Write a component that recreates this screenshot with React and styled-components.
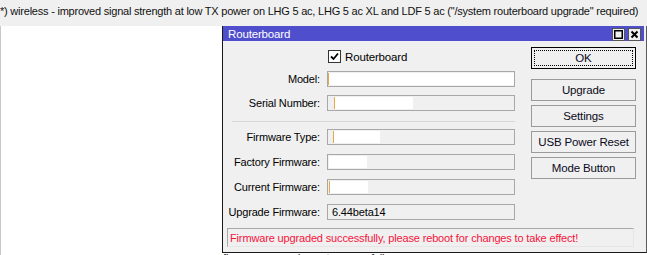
import styled, { createGlobalStyle } from "styled-components";

const GlobalStyle = createGlobalStyle`
  html, body {
    margin: 0;
    padding: 0;
    background: #ffffff;
    overflow: hidden;
  }
  body {
    font-family: "Liberation Sans", Arial, sans-serif;
    font-size: 11px;
    letter-spacing: -0.15px;
    color: #000;
  }
`;

const Page = styled.div`
  position: relative;
  width: 647px;
  height: 255px;
  overflow: hidden;
  background: #ffffff;
`;

const Banner = styled.div`
  height: 26px;
  background: #f0f0f0;
  padding: 4px 0 0 0;
  box-sizing: border-box;
  font-size: 11px;
  letter-spacing: -0.22px;
  line-height: 14px;
  white-space: nowrap;
  color: #111;
`;

const Desk = styled.div`
  height: 229px;
  border-left: 1px solid #c8c8c8;
  position: relative;
`;

const LogLine = styled.div`
  position: absolute;
  left: 222px;
  top: 226px;
  color: #111;
  white-space: nowrap;
`;

const Window = styled.div`
  position: absolute;
  left: 222px;
  top: 26px;
  width: 425px;
  height: 227px;
  box-sizing: border-box;
  background: #f0f0f0;
  border-left: 1px solid #1a1a1a;
  border-right: 1px solid #5a5a5a;
  border-bottom: 1px solid #1a1a1a;
  padding-right: 2px;
  display: flex;
  flex-direction: column;
`;

const TitleBar = styled.div`
  height: 15px;
  background: #4f4fcd;
  display: flex;
  align-items: center;
  padding: 0 3px 0 5px;
  color: #fff;
  font-size: 11.5px;
`;

const Title = styled.span`
  flex: 1;
`;

const TitleButton = styled.div`
  width: 13px;
  height: 13px;
  margin-left: 3px;
  margin-top: 1px;
  background: #f0f0f0;
  border: 1px solid #555;
  box-sizing: border-box;
  display: flex;
  align-items: center;
  justify-content: center;
`;

const Body = styled.div`
  flex: 1;
  display: grid;
  grid-template-columns: 290px 105px;
  column-gap: 16px;
  padding: 0 0 0 2px;
  align-content: start;
`;

const Form = styled.div`
  display: flex;
  flex-direction: column;
`;

const CheckRow = styled.label`
  display: flex;
  align-items: center;
  gap: 4px;
  height: 13px;
  margin: 9px 0 0 103px;
  font-size: 11.5px;
`;

const Box = styled.span`
  width: 13px;
  height: 13px;
  box-sizing: border-box;
  border: 1px solid #333;
  background: #fff;
  display: flex;
  align-items: center;
  justify-content: center;
`;

const Row = styled.div`
  display: flex;
  align-items: center;
  height: 16px;
  margin-top: ${(p) => p.$gap}px;
`;

const Label = styled.span`
  width: 95px;
  text-align: right;
  margin-right: 7px;
  white-space: nowrap;
`;

const Field = styled.div`
  width: 188px;
  height: 16px;
  box-sizing: border-box;
  border: 1px solid #a8a8a8;
  display: flex;
  align-items: center;
  padding-left: 4px;
  background: #f0f0f0;
  white-space: nowrap;
`;

const Redact = styled.span`
  display: block;
  height: 12px;
  width: ${(p) => p.$w}px;
  margin-left: ${(p) => p.$x}px;
  background: #fff;
  border-left: ${(p) => (p.$mark ? "1px solid #e8a848" : "none")};
`;

const Separator = styled.div`
  height: 1px;
  margin: 10px 0 7px 7px;
  width: 283px;
  background: #d8d8d8;
`;

const Buttons = styled.div`
  display: flex;
  flex-direction: column;
  gap: 4px;
  padding-top: 6px;
`;

const Button = styled.div`
  height: 22px;
  box-sizing: border-box;
  border: 1px solid ${(p) => (p.$default ? "#000" : "#9a9a9a")};
  background: #f0f0f0;
  display: flex;
  align-items: center;
  justify-content: center;
  position: relative;
  margin-bottom: ${(p) => (p.$default ? 6 : 0)}px;
  color: #0a0a20;
  font-size: 11.5px;
`;

const Focus = styled.span`
  position: absolute;
  inset: 2px;
  border: 1px dotted #000;
`;

const Status = styled.div`
  grid-column: 1 / span 2;
  margin: 8px 2px 0 2px;
  height: 19px;
  box-sizing: border-box;
  border: 1px solid #a8a8a8;
  border-right-color: #e6e6e6;
  border-bottom-color: #e6e6e6;
  padding-left: 2px;
  display: flex;
  align-items: center;
  color: #f5143c;
  white-space: nowrap;
`;

const rows = [
  { label: "Model:", gap: 8, redact: { x: -4, w: 186, mark: true } },
  { label: "Serial Number:", gap: 8, redact: { x: 2, w: 78, mark: true } },
];

const rows2 = [
  { label: "Firmware Type:", gap: 0, redact: { x: 1, w: 46, mark: true } },
  { label: "Factory Firmware:", gap: 9, redact: { x: -3, w: 38 } },
  { label: "Current Firmware:", gap: 9, redact: { x: -3, w: 38, mark: true } },
  { label: "Upgrade Firmware:", gap: 9, text: "6.44beta14" },
];

function FieldRow({ row }) {
  return (
    <Row $gap={row.gap}>
      <Label>{row.label}</Label>
      <Field>
        {row.text ? row.text : <Redact $x={row.redact.x} $w={row.redact.w} $mark={row.redact.mark} />}
      </Field>
    </Row>
  );
}

export default function App() {
  return (
    <Page>
      <GlobalStyle />
      <Banner>
        *) wireless - improved signal strength at low TX power on LHG 5 ac, LHG 5 ac XL and LDF 5 ac ("/system routerboard upgrade" required)
      </Banner>
      <Desk>
        <LogLine>firmware upgrade sent successfully</LogLine>
      </Desk>
      <Window>
        <TitleBar>
          <Title>Routerboard</Title>
          <TitleButton>
            <svg width="9" height="9" viewBox="0 0 9 9">
              <rect x="0.75" y="0.75" width="7.5" height="7.5" fill="none" stroke="#000" strokeWidth="1.5" />
            </svg>
          </TitleButton>
          <TitleButton>
            <svg width="9" height="9" viewBox="0 0 9 9">
              <path d="M1.5 1.5 L7.5 7.5 M7.5 1.5 L1.5 7.5" stroke="#000" strokeWidth="2" />
            </svg>
          </TitleButton>
        </TitleBar>
        <Body>
          <Form>
            <CheckRow>
              <Box>
                <svg width="9" height="9" viewBox="0 0 9 9">
                  <path d="M1 4.5 L3.5 7 L8 1.5" fill="none" stroke="#000" strokeWidth="1.8" />
                </svg>
              </Box>
              Routerboard
            </CheckRow>
            {rows.map((r) => (
              <FieldRow key={r.label} row={r} />
            ))}
            <Separator />
            {rows2.map((r) => (
              <FieldRow key={r.label} row={r} />
            ))}
          </Form>
          <Buttons>
            <Button $default>
              <Focus />
              OK
            </Button>
            <Button>Upgrade</Button>
            <Button>Settings</Button>
            <Button>USB Power Reset</Button>
            <Button>Mode Button</Button>
          </Buttons>
          <Status>Firmware upgraded successfully, please reboot for changes to take effect!</Status>
        </Body>
      </Window>
    </Page>
  );
}
